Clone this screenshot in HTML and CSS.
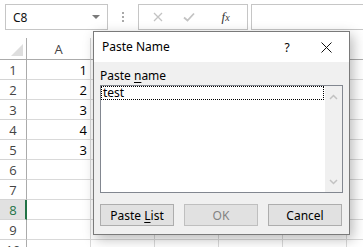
FILE: index.html
```html
<!DOCTYPE html>
<html>
<head>
<meta charset="utf-8">
<link rel="stylesheet" href="styles.css">
</head>
<body>
<div class="app">
  <div class="toolbar">
    <div class="namebox">
      <span class="nb-text">C8</span>
      <svg class="nb-arrow" width="8" height="5" viewBox="0 0 8 5"><path d="M0 0 L8 0 L4 4 Z" fill="#7a7a7a"/></svg>
    </div>
    <div class="sep"><span></span><span></span><span></span></div>
    <div class="fxbtns">
      <span class="fxb fxb-x"><svg width="10" height="10" viewBox="0 0 10 10"><path d="M1 1 L9 9 M9 1 L1 9" stroke="#c3c3c3" stroke-width="1.3" fill="none"/></svg></span>
      <span class="fxb fxb-ok"><svg width="12" height="10" viewBox="0 0 12 10"><path d="M1 5.5 L4.5 8.5 L11 1.5" stroke="#c3c3c3" stroke-width="1.8" fill="none"/></svg></span>
      <span class="fxb fxb-fx"><i>f<small>x</small></i></span>
    </div>
    <div class="formula"></div>
  </div>
  <div class="sheet">
    <div class="hdr corner"><svg width="12" height="12" viewBox="0 0 12 12"><path d="M12 0 L12 12 L0 12 Z" fill="#dedede"/></svg></div>
    <div class="hdr col">A</div>
    <div class="hdr col">B</div>
    <div class="hdr col">C</div>
    <div class="hdr col">D</div>
    <div class="hdr col">E</div>
    <div class="hdr col"></div>

    <div class="rh">1</div><div class="c num">1</div><div class="c"></div><div class="c"></div><div class="c"></div><div class="c"></div><div class="c"></div>
    <div class="rh">2</div><div class="c num">2</div><div class="c"></div><div class="c"></div><div class="c"></div><div class="c"></div><div class="c"></div>
    <div class="rh">3</div><div class="c num">3</div><div class="c"></div><div class="c"></div><div class="c"></div><div class="c"></div><div class="c"></div>
    <div class="rh">4</div><div class="c num">4</div><div class="c"></div><div class="c"></div><div class="c"></div><div class="c"></div><div class="c"></div>
    <div class="rh">5</div><div class="c num">3</div><div class="c"></div><div class="c"></div><div class="c"></div><div class="c"></div><div class="c"></div>
    <div class="rh">6</div><div class="c"></div><div class="c"></div><div class="c"></div><div class="c"></div><div class="c"></div><div class="c"></div>
    <div class="rh">7</div><div class="c"></div><div class="c"></div><div class="c"></div><div class="c"></div><div class="c"></div><div class="c"></div>
    <div class="rh sel">8</div><div class="c"></div><div class="c"></div><div class="c"></div><div class="c"></div><div class="c"></div><div class="c"></div>
    <div class="rh">9</div><div class="c"></div><div class="c"></div><div class="c"></div><div class="c"></div><div class="c"></div><div class="c"></div>
    <div class="rh">10</div><div class="c"></div><div class="c"></div><div class="c"></div><div class="c"></div><div class="c"></div><div class="c"></div>
  </div>
</div>

<div class="dialog">
  <div class="dlg-title">
    <span class="dlg-caption">Paste Name</span>
    <span class="dlg-help">?</span>
    <span class="dlg-close"><svg width="11" height="11" viewBox="0 0 11 11"><path d="M0.5 0.5 L10.5 10.5 M10.5 0.5 L0.5 10.5" stroke="#111" stroke-width="1" fill="none"/></svg></span>
  </div>
  <div class="dlg-body">
    <div class="dlg-label">Paste <u>n</u>ame</div>
    <div class="listbox">
      <div class="items">
        <div class="item">test</div>
      </div>
      <div class="vscroll">
        <svg width="9" height="6" viewBox="0 0 9 6"><path d="M1 5 L4.5 1.5 L8 5" stroke="#c2c2c2" stroke-width="1.5" fill="none"/></svg>
        <svg width="9" height="6" viewBox="0 0 9 6"><path d="M1 1 L4.5 4.5 L8 1" stroke="#c2c2c2" stroke-width="1.5" fill="none"/></svg>
      </div>
    </div>
    <div class="buttons">
      <div class="btn"><span>Paste <u>L</u>ist</span></div>
      <div class="btn disabled"><span>OK</span></div>
      <div class="btn"><span>Cancel</span></div>
    </div>
  </div>
</div>
</body>
</html>
```

FILE: styles.css
```css
* { box-sizing: border-box; }
html, body { margin: 0; padding: 0; }
body {
  width: 363px;
  height: 247px;
  overflow: hidden;
  background: #ffffff;
  position: relative;
  font-family: "Noto Sans", "Open Sans", sans-serif;
  font-size: 12px;
  color: #000;
}
.app { width: 363px; }

/* toolbar */
.toolbar {
  height: 38px;
  display: flex;
  align-items: flex-start;
  padding-top: 4px;
  padding-left: 5px;
  background: #fff;
}
.namebox {
  width: 103px;
  height: 26px;
  border: 1px solid #c6c6c6;
  display: flex;
  align-items: center;
  justify-content: space-between;
  padding: 0 7px 0 7px;
}
.nb-text { font-size: 12px; color: #111; }
.sep {
  width: 30px;
  height: 26px;
  display: flex;
  flex-direction: column;
  align-items: center;
  justify-content: center;
  gap: 2px;
}
.sep span { width: 2px; height: 2px; background: #a9a9a9; }
.fxbtns {
  width: 110px;
  height: 26px;
  border: 1px solid #c6c6c6;
  display: flex;
  align-items: center;
  padding-left: 3px;
}
.fxb {
  display: flex;
  align-items: center;
  justify-content: center;
  width: 32px;
  height: 24px;
}
.fxb-fx { width: 44px; }
.fxb-fx i {
  font-family: "Liberation Serif", serif;
  font-size: 13px;
  color: #333;
}
.fxb-fx small { font-size: 10px; }
.formula {
  flex: 1;
  margin-left: 3px;
  margin-right: -3px;
  height: 26px;
  border: 1px solid #c6c6c6;
}

/* sheet */
.sheet {
  display: grid;
  grid-template-columns: 27px repeat(6, 64px);
  grid-template-rows: 22px repeat(10, 20px);
  font-family: "Open Sans", "Noto Sans", sans-serif;
  font-size: 13px;
}
.hdr {
  border-right: 1px solid #d4d4d4;
  border-bottom: 1px solid #ababab;
  background: #fff;
  color: #444;
  display: flex;
  align-items: center;
  justify-content: center;
}
.corner {
  border-right: 1px solid #ababab;
  align-items: flex-end;
  justify-content: flex-end;
  padding: 0 3px 3px 0;
}
.rh {
  border-right: 1px solid #ababab;
  border-bottom: 1px solid #d4d4d4;
  color: #444;
  display: flex;
  align-items: center;
  justify-content: center;
}
.rh.sel {
  background: #e1e1e1;
  color: #217346;
  border-right: 2px solid #217346;
  padding-left: 1px;
}
.c {
  border-right: 1px solid #d9d9d9;
  border-bottom: 1px solid #d9d9d9;
}
.num {
  display: flex;
  align-items: center;
  justify-content: flex-end;
  padding-right: 3px;
  color: #000;
}

/* dialog */
.dialog {
  position: absolute;
  left: 93px;
  top: 31px;
  width: 257px;
  height: 204px;
  border: 1px solid #7a7a7a;
  background: #f0f0f0;
  box-shadow: 3px 4px 12px rgba(0, 0, 0, 0.28);
  display: flex;
  flex-direction: column;
}
.dlg-title {
  height: 30px;
  background: #fff;
  display: flex;
  align-items: center;
  padding-left: 8px;
}
.dlg-caption { flex: 1; font-size: 12px; color: #000; padding-bottom: 1px; }
.dlg-help { width: 20px; text-align: center; font-size: 12px; margin-right: 24px; }
.dlg-close { width: 12px; display: flex; margin-right: 16px; }
.dlg-body {
  flex: 1;
  padding: 6px 6px 0 6px;
}
.dlg-label {
  height: 17px;
  line-height: 16px;
  font-size: 12px;
}
.dlg-label u, .btn u { text-underline-offset: 2px; }
.listbox {
  width: 243px;
  height: 108px;
  border: 1px solid #828790;
  background: #fff;
  display: flex;
}
.items { flex: 1; padding-right: 1px; }
.item {
  height: 14px;
  line-height: 12px;
  border: 1px dotted #000;
  padding-left: 1px;
  font-size: 12px;
}
.vscroll {
  width: 17px;
  background: #f0f0f0;
  display: flex;
  flex-direction: column;
  justify-content: space-between;
  align-items: center;
  padding: 8px 0 7px 0;
}
.buttons {
  display: flex;
  gap: 10px;
  margin-top: 11px;
}
.btn {
  width: 74px;
  height: 22px;
  border: 1px solid #adadad;
  background: #e1e1e1;
  display: flex;
  align-items: center;
  justify-content: center;
  font-size: 12px;
  color: #000;
}
.btn.disabled {
  color: #838383;
  border-color: #bfbfbf;
  background: #e1e1e1;
}
```
